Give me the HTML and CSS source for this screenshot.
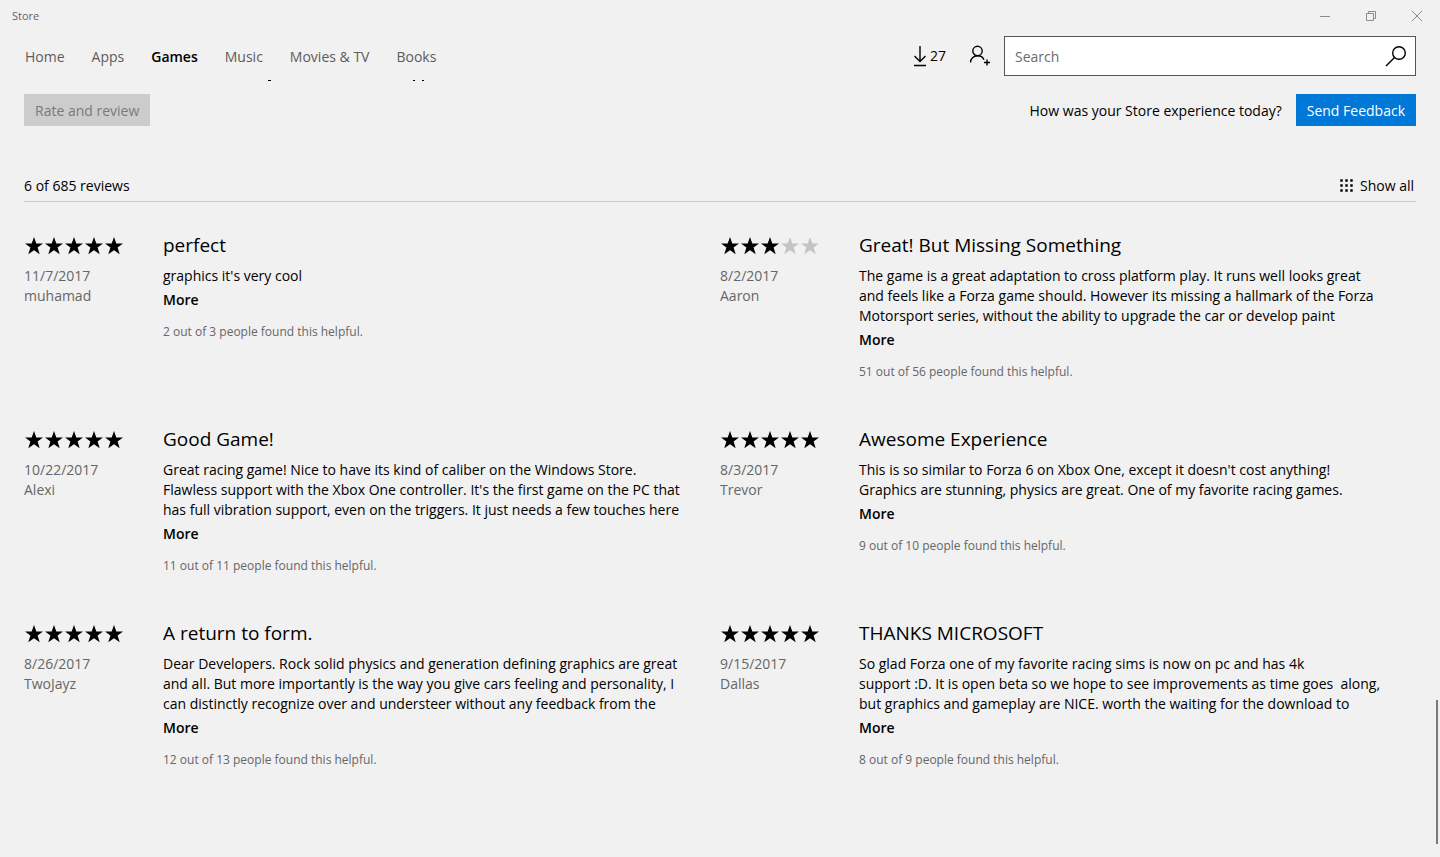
FILE: index.html
```html
<!DOCTYPE html>
<html lang="en">
<head>
    <meta charset="UTF-8">
    <meta name="viewport" content="width=device-width, initial-scale=1.0">
    <title>Store</title>
    <link rel="stylesheet" href="styles.css">
</head>
<body>
    <!-- Shared star shape -->
    <svg class="defs" width="0" height="0" aria-hidden="true">
        <symbol id="star" viewBox="0 0 20 20">
            <path d="M10 1 L12.3 7.4 H19 L13.6 11.5 L15.7 18.2 L10 14.2 L4.3 18.2 L6.4 11.5 L1 7.4 H7.7 Z"/>
        </symbol>
    </svg>

    <div class="title-bar">
        <span>Store</span>
        <div class="window-buttons">
            <button type="button" aria-label="Minimize">
                <svg width="12" height="12" viewBox="0 0 12 12"><path d="M1 6.5H11"/></svg>
            </button>
            <button type="button" aria-label="Restore">
                <svg width="12" height="12" viewBox="0 0 12 12"><path d="M1.5 3.5H8.5V10.5H1.5Z M3.5 3.5V1.5H10.5V8.5H8.5"/></svg>
            </button>
            <button type="button" aria-label="Close">
                <svg width="12" height="12" viewBox="0 0 12 12"><path d="M1 1L11 11M11 1L1 11"/></svg>
            </button>
        </div>
    </div>

    <header>
        <nav>
            <a href="#">Home</a>
            <a href="#">Apps</a>
            <a href="#" class="active">Games</a>
            <a href="#">Music</a>
            <a href="#">Movies &amp; TV</a>
            <a href="#">Books</a>
        </nav>
        <button type="button" class="downloads" aria-label="Downloads">
            <svg width="14" height="22" viewBox="0 0 14 22"><path d="M7 1V16M1.5 11L7 16.5L12.5 11M1 20.5H13"/></svg>
            <span>27</span>
        </button>
        <button type="button" class="account" aria-label="Add account">
            <svg width="22" height="22" viewBox="0 0 22 22"><circle cx="8.5" cy="6" r="4.7"/><path d="M1.5 17.5C1.5 13.5 4.5 10.8 8.5 10.8C11.5 10.8 14 12.3 15 14.7M18 14.5V20.5M15 17.5H21"/></svg>
        </button>
        <form class="search">
            <input type="text" placeholder="Search" aria-label="Search">
            <button type="submit" aria-label="Go">
                <svg width="22" height="22" viewBox="0 0 22 22"><circle cx="14" cy="8" r="6.3"/><path d="M9.5 12.5L1 21"/></svg>
            </button>
        </form>
    </header>

    <main>
        <!-- Bottom edge of the line scrolled under the header -->
        <svg class="scrolled-line" width="420" height="1" aria-hidden="true"><path d="M244 0h3v1h-3zM389 0h2v1h-2zM398 0h2v1h-2z"/></svg>

        <div class="actions">
            <button type="button" class="rate" disabled>Rate and review</button>
            <div class="feedback">
                <span>How was your Store experience today?</span>
                <button type="button" class="send">Send Feedback</button>
            </div>
        </div>

        <div class="list-head">
            <span>6 of 685 reviews</span>
            <a href="#">
                <svg width="14" height="14" viewBox="0 0 14 14"><path d="M0.3 0.3h2.4v2.4H0.3zM5.3 0.3h2.4v2.4H5.3zM10.3 0.3h2.4v2.4h-2.4zM0.3 5.3h2.4v2.4H0.3zM5.3 5.3h2.4v2.4H5.3zM10.3 5.3h2.4v2.4h-2.4zM0.3 10.3h2.4v2.4H0.3zM5.3 10.3h2.4v2.4H5.3zM10.3 10.3h2.4v2.4h-2.4z"/></svg>
                Show all
            </a>
        </div>

        <div class="reviews">
            <article class="review">
                <div class="meta">
                    <div class="stars" role="img" aria-label="5 stars">
                        <svg><use href="#star"/></svg><svg><use href="#star"/></svg><svg><use href="#star"/></svg><svg><use href="#star"/></svg><svg><use href="#star"/></svg>
                    </div>
                    <p>11/7/2017</p>
                    <p>muhamad</p>
                </div>
                <div class="text">
                    <h3>perfect</h3>
                    <p>graphics it's very cool</p>
                    <a href="#">More</a>
                    <p class="helpful">2 out of 3 people found this helpful.</p>
                </div>
            </article>

            <article class="review">
                <div class="meta">
                    <div class="stars" role="img" aria-label="3 stars">
                        <svg><use href="#star"/></svg><svg><use href="#star"/></svg><svg><use href="#star"/></svg><svg class="off"><use href="#star"/></svg><svg class="off"><use href="#star"/></svg>
                    </div>
                    <p>8/2/2017</p>
                    <p>Aaron</p>
                </div>
                <div class="text">
                    <h3>Great! But Missing Something</h3>
                    <p>The game is a great adaptation to cross platform play. It runs well looks great<br>
                    and feels like a Forza game should. However its missing a hallmark of the Forza<br>
                    Motorsport series, without the ability to upgrade the car or develop paint</p>
                    <a href="#">More</a>
                    <p class="helpful">51 out of 56 people found this helpful.</p>
                </div>
            </article>

            <article class="review">
                <div class="meta">
                    <div class="stars" role="img" aria-label="5 stars">
                        <svg><use href="#star"/></svg><svg><use href="#star"/></svg><svg><use href="#star"/></svg><svg><use href="#star"/></svg><svg><use href="#star"/></svg>
                    </div>
                    <p>10/22/2017</p>
                    <p>Alexi</p>
                </div>
                <div class="text">
                    <h3>Good Game!</h3>
                    <p>Great racing game! Nice to have its kind of caliber on the Windows Store.<br>
                    Flawless support with the Xbox One controller. It's the first game on the PC that<br>
                    has full vibration support, even on the triggers. It just needs a few touches here</p>
                    <a href="#">More</a>
                    <p class="helpful">11 out of 11 people found this helpful.</p>
                </div>
            </article>

            <article class="review">
                <div class="meta">
                    <div class="stars" role="img" aria-label="5 stars">
                        <svg><use href="#star"/></svg><svg><use href="#star"/></svg><svg><use href="#star"/></svg><svg><use href="#star"/></svg><svg><use href="#star"/></svg>
                    </div>
                    <p>8/3/2017</p>
                    <p>Trevor</p>
                </div>
                <div class="text">
                    <h3>Awesome Experience</h3>
                    <p>This is so similar to Forza 6 on Xbox One, except it doesn't cost anything!<br>
                    Graphics are stunning, physics are great. One of my favorite racing games.</p>
                    <a href="#">More</a>
                    <p class="helpful">9 out of 10 people found this helpful.</p>
                </div>
            </article>

            <article class="review">
                <div class="meta">
                    <div class="stars" role="img" aria-label="5 stars">
                        <svg><use href="#star"/></svg><svg><use href="#star"/></svg><svg><use href="#star"/></svg><svg><use href="#star"/></svg><svg><use href="#star"/></svg>
                    </div>
                    <p>8/26/2017</p>
                    <p>TwoJayz</p>
                </div>
                <div class="text">
                    <h3>A return to form.</h3>
                    <p>Dear Developers. Rock solid physics and generation defining graphics are great<br>
                    and all. But more importantly is the way you give cars feeling and personality, I<br>
                    can distinctly recognize over and understeer without any feedback from the</p>
                    <a href="#">More</a>
                    <p class="helpful">12 out of 13 people found this helpful.</p>
                </div>
            </article>

            <article class="review">
                <div class="meta">
                    <div class="stars" role="img" aria-label="5 stars">
                        <svg><use href="#star"/></svg><svg><use href="#star"/></svg><svg><use href="#star"/></svg><svg><use href="#star"/></svg><svg><use href="#star"/></svg>
                    </div>
                    <p>9/15/2017</p>
                    <p>Dallas</p>
                </div>
                <div class="text">
                    <h3>THANKS MICROSOFT</h3>
                    <p>So glad Forza one of my favorite racing sims is now on pc and has 4k<br>
                    support :D. It is open beta so we hope to see improvements as time goes&nbsp; along,<br>
                    but graphics and gameplay are NICE. worth the waiting for the download to</p>
                    <a href="#">More</a>
                    <p class="helpful">8 out of 9 people found this helpful.</p>
                </div>
            </article>
        </div>
    </main>

    <div class="scroll-thumb"></div>
</body>
</html>
```

FILE: styles.css
```css
* {
    margin: 0;
    padding: 0;
    box-sizing: border-box;
}

body {
    background-color: #f1f1f1;
    color: black;
    font-family: "Open Sans", "Noto Sans", sans-serif;
    font-size: 14px;
    line-height: 20px;
}

a {
    color: inherit;
    text-decoration: none;
}

button {
    border: none;
    background: none;
    color: inherit;
    font: inherit;
}

svg {
    display: block;
    flex-shrink: 0;
}

.defs {
    position: absolute;
}

/* Window title bar */
.title-bar {
    display: flex;
    justify-content: space-between;
    align-items: center;
    height: 32px;
    padding-left: 12px;
    font-size: 11px;
    color: #666;
}

.window-buttons {
    display: flex;
}

.window-buttons button {
    display: flex;
    justify-content: center;
    align-items: center;
    width: 46px;
    height: 32px;
}

.window-buttons svg {
    fill: none;
    stroke: #8c8c8c;
}

/* Navigation */
header {
    display: flex;
    align-items: center;
    padding: 4px 24px;
}

header svg {
    fill: none;
    stroke: black;
    stroke-width: 1.4;
}

nav {
    display: flex;
    gap: 27px;
    flex: 1;
    padding: 2px 0 0 1px;
    color: #5c5c5c;
}

nav .active {
    color: black;
    font-weight: 600;
}

.downloads {
    display: flex;
    align-items: center;
    gap: 3px;
    margin-right: 23px;
}

.account {
    margin-right: 13px;
}

.search {
    display: flex;
    align-items: center;
    width: 412px;
    height: 40px;
    padding-right: 8px;
    border: 1px solid #555;
    background-color: white;
}

.search input {
    flex: 1;
    height: 38px;
    padding: 0 10px;
    border: none;
    outline: none;
    background: none;
    font: inherit;
}

.search input::placeholder {
    color: #6b6b6b;
}

main {
    padding: 0 24px;
}

.scrolled-line {
    margin-bottom: 13px;
}

.actions,
.list-head {
    display: flex;
    justify-content: space-between;
    align-items: center;
}

.feedback {
    display: flex;
    align-items: center;
    gap: 14px;
}

.feedback span {
    padding-top: 2px;
}

.rate,
.send {
    height: 32px;
    padding: 2px 11px 0;
}

.rate {
    background-color: #ccc;
    color: #7a7a7a;
}

.send {
    background-color: #0078d7;
    color: white;
}

.list-head {
    margin-top: 50px;
    padding-bottom: 5px;
    border-bottom: 1px solid #ccc;
}

.list-head a {
    display: flex;
    align-items: center;
    gap: 6px;
    padding-right: 2px;
}

/* Reviews */
.reviews {
    display: grid;
    grid-template-columns: 1fr 1fr;
    row-gap: 44px;
    padding: 30px 0;
}

.review {
    display: flex;
}

.meta {
    width: 139px;
    flex-shrink: 0;
    color: #666;
}

.stars {
    display: flex;
    height: 28px;
    align-items: center;
    margin-bottom: 6px;
}

.stars svg {
    width: 20px;
    height: 20px;
    fill: black;
}

.stars .off {
    fill: #c4c4c4;
}

.text {
    flex: 1;
}

.text h3 {
    margin-bottom: 8px;
    font-size: 19px;
    font-weight: 400;
    line-height: 26px;
}

.text a {
    display: inline-block;
    margin-top: 4px;
    font-weight: 600;
}

.text .helpful {
    margin-top: 12px;
    font-size: 12px;
    color: #666;
}

.scroll-thumb {
    position: fixed;
    right: 2px;
    bottom: 13px;
    width: 2px;
    height: 144px;
    background-color: #7a7a7a;
}
```
